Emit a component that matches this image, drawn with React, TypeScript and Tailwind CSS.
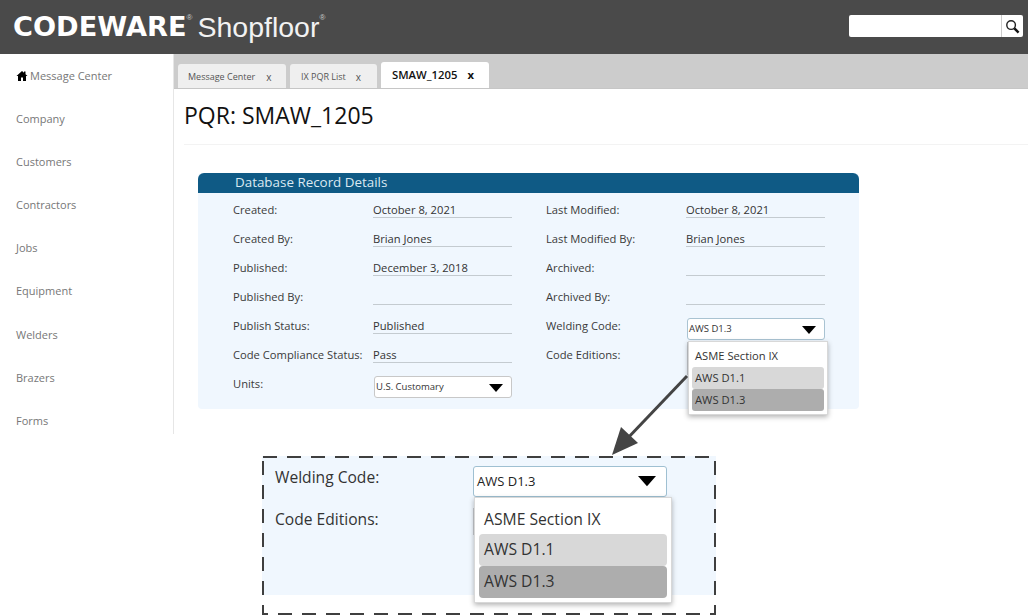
const nav = ['Company', 'Customers', 'Contractors', 'Jobs', 'Equipment', 'Welders', 'Brazers', 'Forms']

const left = [
  ['Created:', 'October 8, 2021'],
  ['Created By:', 'Brian Jones'],
  ['Published:', 'December 3, 2018'],
  ['Published By:', ''],
  ['Publish Status:', 'Published'],
  ['Code Compliance Status:', 'Pass'],
]

const right = [
  ['Last Modified:', 'October 8, 2021'],
  ['Last Modified By:', 'Brian Jones'],
  ['Archived:', ''],
  ['Archived By:', ''],
]

function Caret({ className }: { className: string }) {
  return (
    <svg viewBox="0 0 14 8" className={className}>
      <path d="M0 0h14L7 8z" fill="#000" />
    </svg>
  )
}

function Field({ label, value }: { label: string; value: string }) {
  return (
    <div className="flex h-[29px] items-start">
      <span className="w-[140px] shrink-0 whitespace-nowrap pt-[6px] text-[11.2px] leading-[15px] text-[#3a3a3a]">{label}</span>
      <span className="h-[22px] w-[139px] border-b border-[#c4cbd0] pt-[6px] text-[11.2px] leading-[15px] text-[#333]">{value}</span>
    </div>
  )
}

function Tab({ label, className, closeClass }: { label: string; className: string; closeClass: string }) {
  return (
    <div className={`flex h-[24px] items-center rounded-t-[3px] bg-[#efefef] pt-[2px] text-[9px] text-[#555] ${className}`}>
      <span>{label}</span>
      <span className={`text-[10px] ${closeClass}`}>x</span>
    </div>
  )
}

export default function App() {
  return (
    <div className="h-[615px] w-[1028px] overflow-hidden bg-white font-['Open_Sans',sans-serif]">
      <header className="flex h-[54px] items-center justify-between bg-[#4a4a4a] pl-[13px] pr-[5px]">
        <div className="flex items-start text-white">
          <span className="font-['DejaVu_Sans',sans-serif] text-[27.2px] font-bold leading-[30px] whitespace-nowrap">CODEWARE</span>
          <span className="mt-[1px] font-['Liberation_Sans',sans-serif] text-[8px] leading-[10px] text-[#ccc]">®</span>
          <span className="ml-[5px] font-['Liberation_Sans',sans-serif] text-[28.5px] leading-[30px] text-[#f2f2f2]">Shopfloor</span>
          <span className="mt-[1px] font-['Liberation_Sans',sans-serif] text-[8px] leading-[10px] text-[#ccc]">®</span>
        </div>
        <div className="mb-[2px] flex h-[22px] w-[174px] rounded-[2px] bg-white">
          <div className="flex-1 border-r border-[#ccc]" />
          <div className="flex w-[21px] items-center justify-center">
            <svg viewBox="0 0 16 16" className="size-[15px]" fill="none">
              <circle cx="6.5" cy="6.5" r="4.6" stroke="#222" strokeWidth="1.5" />
              <path d="M10 10l4.5 4.5" stroke="#111" strokeWidth="2.6" />
            </svg>
          </div>
        </div>
      </header>

      <div className="flex h-[380px]">
        <aside className="w-[174px] shrink-0 border-r border-[#e6e6e6] pl-[16px] pt-[13px]">
          <div className="flex h-[18px] items-center text-[11px] text-[#777]">
            <svg viewBox="0 0 24 24" className="mr-[2px] size-[12px]" fill="#000">
              <path d="M12 2 1 12h3v10h6v-7h4v7h6V12h3l-4-3.6V3h-3v2.7z" />
            </svg>
            Message Center
          </div>
          {nav.map((n) => (
            <div key={n} className="mt-[25.15px] flex h-[18px] items-center text-[11px] text-[#777]">{n}</div>
          ))}
        </aside>

        <main className="relative flex-1">
          <div className="flex h-[35px] items-end gap-[4px] border-b border-[#c6c6c6] bg-[#cccccc] pl-[4px]">
            <Tab label="Message Center" className="w-[108px] pl-[10px]" closeClass="ml-[11px]" />
            <Tab label="IX PQR List" className="w-[87px] pl-[11px]" closeClass="ml-[10px]" />
            <div className="flex h-[26px] w-[108px] items-center rounded-t-[3px] bg-white pl-[11px] pt-[1px] text-[11.3px] font-semibold text-[#111]">
              <span>SMAW_1205</span>
              <span className="ml-[10px] font-bold">x</span>
            </div>
          </div>
          <div className="ml-[10px] h-[56px] border-b border-[#f3f3f3] pt-[10px]">
            <h1 className="text-[23px] font-medium leading-[32px] text-[#111]">PQR: SMAW_1205</h1>
          </div>

          <section className="ml-[24px] mt-[28px] h-[236px] w-[661px] rounded-[4px] bg-[#f0f7fe]">
            <div className="h-[20px] rounded-t-[6px] bg-[#0f5a85] pl-[37px] text-[13.4px] leading-[18px] text-[#dbe9f2]">Database Record Details</div>
            <div className="flex pl-[35px] pt-[3px]">
              <div className="w-[313px]">
                {left.map(([l, v]) => (
                  <Field key={l} label={l} value={v} />
                ))}
                <div className="flex items-start pt-[6px]">
                  <span className="w-[141px] text-[11.2px] leading-[15px] text-[#3a3a3a]">Units:</span>
                  <div className="flex h-[22px] w-[138px] items-center justify-between rounded-[3px] border border-[#c8c8c8] bg-white pl-[1px] pr-[8px] pt-[1px] text-[9.5px] font-medium text-[#333]">
                    U.S. Customary
                    <Caret className="w-[14px]" />
                  </div>
                </div>
              </div>
              <div>
                {right.map(([l, v]) => (
                  <Field key={l} label={l} value={v} />
                ))}
                <div className="flex h-[29px] items-start pt-[6px]">
                  <span className="w-[141px] text-[11.2px] leading-[15px] text-[#3a3a3a]">Welding Code:</span>
                  <div className="flex h-[22px] w-[138px] items-center justify-between rounded-[3px] border border-[#a9c3d2] bg-white pl-[1px] pr-[8px] pt-[1px] text-[9.5px] font-medium text-[#333]">
                    AWS D1.3
                    <Caret className="w-[14px]" />
                  </div>
                </div>
                <div className="pt-[6px] text-[11.2px] leading-[15px] text-[#3a3a3a]">Code Editions:</div>
              </div>
            </div>
          </section>

          {/* small open dropdown over the card */}
          <div className="absolute left-[513px] top-[288px] h-[33px] w-[1px] bg-[#c8ccd0]" />
          <div className="absolute left-[514px] top-[287px] w-[140px] border border-[#d8d8d8] bg-white px-[3px] pb-[3px] pt-[4px] text-[11.2px] text-[#333] shadow-[0_2px_5px_rgba(0,0,0,0.3)]">
            <div className="flex h-[21px] items-center pl-[3px]">ASME Section IX</div>
            <div className="flex h-[22px] items-center rounded-[3px] bg-[#d8d8d8] pl-[3px]">AWS D1.1</div>
            <div className="flex h-[22px] items-center rounded-[3px] bg-[#adadad] pl-[3px]">AWS D1.3</div>
          </div>
        </main>
      </div>

      {/* zoomed callout */}
      <div className="relative ml-[262px] mt-[22px] h-[159px] w-[454px]">
        <div className="h-[139px] bg-[#f0f7fe] pl-[13px] pt-[10px] text-[15.6px] leading-[22px] text-[#333]">
          <div>Welding Code:</div>
          <div className="mt-[20px]">Code Editions:</div>
        </div>
        <div className="absolute left-[211px] top-[10px] flex h-[31px] w-[194px] items-center justify-between rounded-[3px] border border-[#9fc0d2] bg-white pl-[3px] pr-[10px] text-[13px] font-medium text-[#222]">
          AWS D1.3
          <Caret className="w-[18px]" />
        </div>
        <div className="absolute left-[211px] top-[52px] h-[27px] w-[2px] bg-[#c8ccd0]" />
        <div className="absolute left-[212px] top-[41px] w-[198px] border border-[#d8d8d8] bg-white px-[4px] pb-[4px] pt-[7px] text-[15.7px] text-[#333] shadow-[0_2px_5px_rgba(0,0,0,0.3)]">
          <div className="flex h-[29px] items-center pl-[5px]">ASME Section IX</div>
          <div className="flex h-[32px] items-center rounded-[4px] bg-[#d8d8d8] pl-[5px]">AWS D1.1</div>
          <div className="flex h-[32px] items-center rounded-[4px] bg-[#adadad] pl-[5px]">AWS D1.3</div>
        </div>
        {/* long dash frame, css dashed is too short */}
        <svg className="pointer-events-none absolute left-0 top-0 h-[159px] w-[454px]" fill="none">
          <rect x="1" y="1" width="452" height="157" stroke="#3f3f3f" strokeWidth="2" strokeDasharray="14 10" />
        </svg>
      </div>

      {/* pointer arrow from the dropdown to the callout */}
      <svg viewBox="0 0 1028 615" className="pointer-events-none absolute left-0 top-0 h-[615px] w-[1028px]">
        <path d="M687 376 625 441" stroke="#444" strokeWidth="3" fill="none" />
        <path d="M612 455 621 427 638 443z" fill="#444" />
      </svg>
    </div>
  )
}
